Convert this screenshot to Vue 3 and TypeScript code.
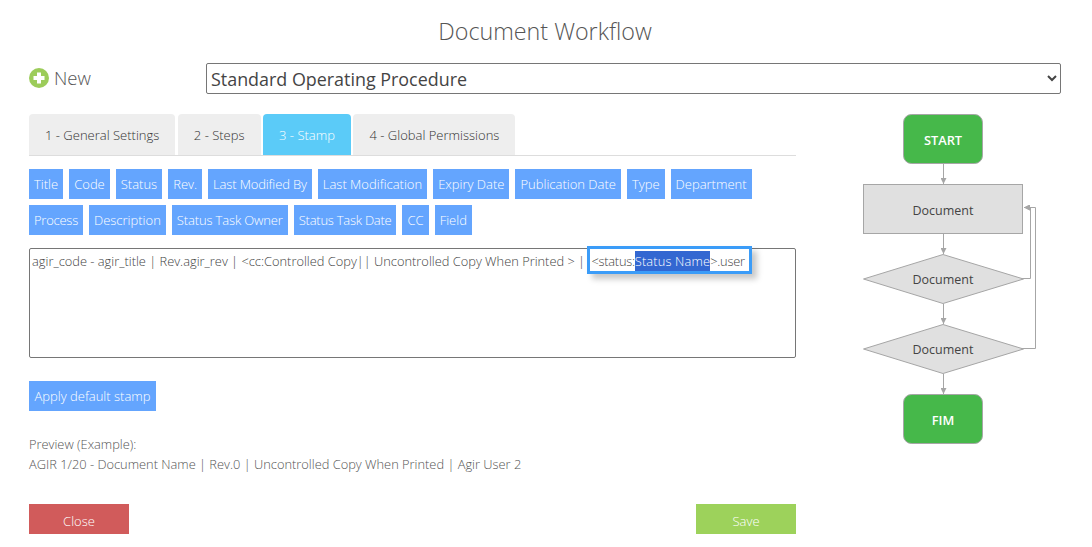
<script setup lang="ts">
const tabs = [
  { label: '1 - General Settings', active: false },
  { label: '2 - Steps', active: false },
  { label: '3 - Stamp', active: true },
  { label: '4 - Global Permissions', active: false },
]
const fieldRows: { label: string; fit?: string }[][] = [
  [
    { label: 'Title' },
    { label: 'Code' },
    { label: 'Status' },
    { label: 'Rev.' },
    { label: 'Last Modified By', fit: 'snug' },
    { label: 'Last Modification' },
    { label: 'Expiry Date' },
    { label: 'Publication Date' },
    { label: 'Type' },
    { label: 'Department' },
  ],
  [
    { label: 'Process', fit: 'tight' },
    { label: 'Description' },
    { label: 'Status Task Owner', fit: 'snug' },
    { label: 'Status Task Date', fit: 'tight' },
    { label: 'CC' },
    { label: 'Field' },
  ],
]
</script>

<template>
  <div class="page">
    <h1 class="title">Document Workflow</h1>
    <div class="top-row">
      <div class="new">
        <svg class="plus" width="20" height="20" viewBox="0 0 20 20">
          <circle cx="10" cy="10" r="10" fill="#9ccc5a" />
          <path d="M10 4.5v11M4.500 10h11" stroke="#fff" stroke-width="4" />
        </svg>
        <span>New</span>
      </div>
      <select class="type-select">
        <option>Standard Operating Procedure</option>
      </select>
    </div>
    <div class="body">
      <div class="main">
        <div class="tabs">
          <div v-for="t in tabs" :key="t.label" class="tab" :class="{ active: t.active }">{{ t.label }}</div>
        </div>
        <div v-for="(row, i) in fieldRows" :key="i" class="chips">
          <span v-for="c in row" :key="c.label" class="chip" :class="c.fit">{{ c.label }}</span>
        </div>
        <div class="editor">agir_code - agir_title | Rev.agir_rev | &lt;cc:Controlled Copy|| Uncontrolled Copy When Printed &gt; | <span class="focus">&lt;status:<span class="sel">Status Name</span>&gt;.user</span></div>
        <button class="chip apply">Apply default stamp</button>
        <p class="preview">Preview (Example):<br />AGIR 1/20 - Document Name | Rev.0 | Uncontrolled Copy When Printed | Agir User 2</p>
        <div class="actions">
          <button class="act close">Close</button>
          <button class="act save">Save</button>
        </div>
      </div>
      <svg class="flow" width="180" height="340" viewBox="0 0 180 340">
        <defs>
          <marker id="arr" markerWidth="6" markerHeight="6" refX="6" refY="3" orient="auto" markerUnits="userSpaceOnUse">
            <path d="M0 0L6 3L0 6z" fill="#a6a6a6" />
          </marker>
        </defs>
        <g fill="none" stroke="#a6a6a6" stroke-width="1">
          <path d="M80.500 50V70" marker-end="url(#arr)" />
          <path d="M80.500 120V140" marker-end="url(#arr)" />
          <path d="M80.500 190V210" marker-end="url(#arr)" />
          <path d="M80.500 260V280" marker-end="url(#arr)" />
          <path d="M158 164.500H167.500V93.500H161" marker-end="url(#arr)" />
          <path d="M158 234.500H172.500V93.500H161" marker-end="url(#arr)" />
        </g>
        <g stroke="#a6a6a6" stroke-width="1">
          <rect x="40.500" y="0.500" width="79" height="49" rx="8" fill="#46b84a" />
          <rect x="0.500" y="70.500" width="159" height="49" fill="#e0e0e0" />
          <path d="M80 140.500L160.500 165L80 189.500L0.500 165z" fill="#e0e0e0" />
          <path d="M80 210.500L160.500 235L80 259.500L0.500 235z" fill="#e0e0e0" />
          <rect x="40.500" y="280.500" width="79" height="49" rx="8" fill="#46b84a" />
        </g>
        <g class="flow-text" text-anchor="middle">
          <text x="80" y="31" class="w">START</text>
          <text x="80" y="101">Document</text>
          <text x="80" y="170">Document</text>
          <text x="80" y="240">Document</text>
          <text x="80" y="311" class="w">FIM</text>
        </g>
      </svg>
    </div>
  </div>
</template>

<style>
html, body { background: #fff; overflow: hidden; }
</style>

<style scoped>
.page {
  width: 1092px;
  height: 547px;
  box-sizing: border-box;
  padding: 0 31px 0 29px;
  font-family: "Open Sans", "Noto Sans", sans-serif;
  font-weight: 300;
  color: #444;
  font-size: 13px;
  overflow: hidden;
}
.title {
  margin: 0;
  padding-top: 15px;
  height: 63px;
  box-sizing: border-box;
  text-align: center;
  font-size: 23.300px;
  font-weight: 300;
  line-height: 32px;
  color: #555;
}
.top-row {
  display: flex;
  align-items: center;
  height: 31px;
}
.new {
  width: 177px;
  display: flex;
  align-items: center;
  gap: 5px;
  font-size: 18.500px;
  color: #555;
  margin-top: -1px;
}
.new span { margin-top: -2px; }
.plus { flex: none; }
.type-select {
  flex: 1;
  height: 31px;
  box-sizing: border-box;
  font-family: "Open Sans", sans-serif;
  font-size: 17.900px;
  color: #444;
  background: #fff;
  border: 1px solid #767676;
  border-radius: 2px;
  padding-left: 0;
}
.body {
  display: flex;
  margin-top: 20px;
}
.main { width: 767px; flex: none; }
.tabs {
  display: flex;
  gap: 2.500px;
  height: 42px;
  box-sizing: border-box;
  border-bottom: 1px solid #ddd;
  margin-bottom: 13px;
}
.tab {
  height: 41px;
  line-height: 42px;
  padding: 0 16px;
  background: #eee;
  color: #333;
  border-radius: 4px 4px 0 0;
  box-sizing: border-box;
}
.tab.active { background: #5bcbf8; color: #fff; }
.chips {
  display: flex;
  gap: 6px;
  margin-bottom: 6px;
}
.chip {
  display: block;
  height: 30px;
  line-height: 30px;
  padding: 0 5px;
  background: #64a5fe;
  color: #fff;
  font-family: inherit;
  font-weight: 300;
  font-size: 13px;
  white-space: nowrap;
}
.chip.snug { letter-spacing: -0.150px; }
.chip.tight { letter-spacing: -0.250px; }
.editor {
  margin-top: 13px;
  height: 110px;
  box-sizing: border-box;
  border: 1px solid #767676;
  border-radius: 2px;
  padding: 2px;
  line-height: 20px;
  font-size: 12.850px;
  color: #444;
  white-space: nowrap;
  overflow: visible;
}
.focus {
  padding: 3px 4px 1px 1px;
  margin-left: 2px;
  letter-spacing: -0.250px;
  outline: 3px solid #3b9cf8;
  box-shadow: 5px 5px 6px 3px rgba(0, 0, 0, 0.22);
  background: #fff;
}
.sel { background: #3367d1; color: #fff; padding: 1px 0; letter-spacing: 0.150px; }
.apply {
  margin-top: 23px;
  width: 127px;
  text-align: center;
  border: 0;
  cursor: pointer;
}
.preview {
  margin: 23px 0 0;
  line-height: 20px;
  font-size: 12.850px;
  color: #555;
}
.actions {
  display: flex;
  justify-content: space-between;
  margin-top: 30px;
}
.act {
  width: 100px;
  height: 30px;
  border: 0;
  color: #fff;
  font-family: inherit;
  font-weight: 300;
  font-size: 13px;
  padding: 3px 0 0;
}
.close { background: #d15b5b; }
.save { background: #9dd25b; }
.flow {
  flex: none;
  margin-left: 67px;
  overflow: visible;
}
.flow-text text {
  font-size: 12.500px;
  font-weight: 400;
  fill: #444;
}
.flow-text text.w { fill: #fff; font-weight: 600; font-size: 12.800px; }
</style>
